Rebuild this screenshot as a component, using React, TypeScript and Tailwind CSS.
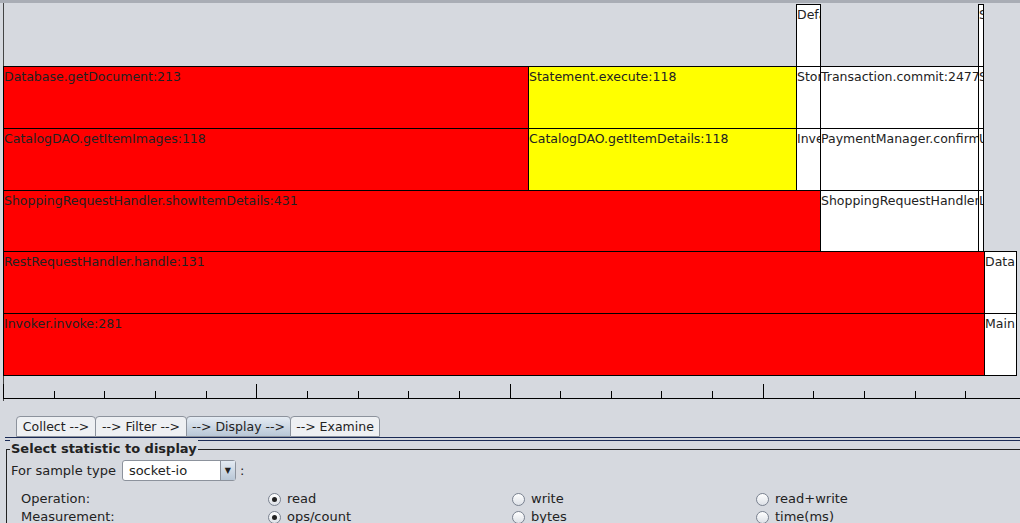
import React from "react";

type Block = { x: number; w: number; row: number; label: string; color: string };

const ROW_TOP = [4, 66, 128, 190, 251, 313];
const ROW_H = [62, 62, 62, 61, 62, 62];

const blocks: Block[] = [
  { row: 0, x: 796, w: 24, label: "Default", color: "#fff" },
  { row: 0, x: 978, w: 5, label: "S", color: "#fff" },
  { row: 1, x: 3, w: 525, label: "Database.getDocument:213", color: "#ff0000" },
  { row: 1, x: 528, w: 268, label: "Statement.execute:118", color: "#ffff00" },
  { row: 1, x: 796, w: 24, label: "Store", color: "#fff" },
  { row: 1, x: 820, w: 158, label: "Transaction.commit:2477", color: "#fff" },
  { row: 1, x: 978, w: 5, label: "S", color: "#fff" },
  { row: 2, x: 3, w: 525, label: "CatalogDAO.getItemImages:118", color: "#ff0000" },
  { row: 2, x: 528, w: 268, label: "CatalogDAO.getItemDetails:118", color: "#ffff00" },
  { row: 2, x: 796, w: 24, label: "Inventory", color: "#fff" },
  { row: 2, x: 820, w: 158, label: "PaymentManager.confirm", color: "#fff" },
  { row: 2, x: 978, w: 5, label: "U", color: "#fff" },
  { row: 3, x: 3, w: 817, label: "ShoppingRequestHandler.showItemDetails:431", color: "#ff0000" },
  { row: 3, x: 820, w: 158, label: "ShoppingRequestHandler", color: "#fff" },
  { row: 3, x: 978, w: 5, label: "L", color: "#fff" },
  { row: 4, x: 3, w: 981, label: "RestRequestHandler.handle:131", color: "#ff0000" },
  { row: 4, x: 984, w: 32, label: "Data", color: "#fff" },
  { row: 5, x: 3, w: 981, label: "Invoker.invoke:281", color: "#ff0000" },
  { row: 5, x: 984, w: 32, label: "Main", color: "#fff" },
];

const ticks = Array.from({ length: 20 }, (_, i) => 3 + Math.round(i * 50.65));

const Radio = ({ on, label }: { on?: boolean; label: string }) => (
  <span className="flex items-center gap-1.5">
    <span className="w-[13px] h-[13px] rounded-full border border-[#7a8290] bg-gradient-to-b from-white to-[#dde1e7] flex items-center justify-center">
      {on && <span className="w-[5px] h-[5px] rounded-full bg-[#222]" />}
    </span>
    {label}
  </span>
);

export default function App() {
  const tabs = [
    { t: "Collect -->", w: 80 },
    { t: "--> Filter -->", w: 92 },
    { t: "--> Display -->", w: 105 },
    { t: "--> Examine", w: 90 },
  ];
  return (
    <div
      className="w-[1020px] h-[523px] overflow-hidden bg-[#d6d9df] text-[13px] text-[#222]"
      style={{ fontFamily: '"DejaVu Sans", sans-serif' }}
    >
      <div className="relative h-[402px] border-t-[3px] border-[#a9adb5]">
        <div className="absolute left-[3px] top-0 w-px h-[398px] bg-[#444]" />
        {blocks.map((b, i) => (
          <div
            key={i}
            className="absolute border border-black overflow-hidden whitespace-nowrap leading-[16px] text-[12.5px] pt-0.5"
            style={{
              left: b.x,
              width: b.w + 1,
              top: ROW_TOP[b.row] - 3,
              height: ROW_H[b.row] + 1,
              background: b.color,
            }}
          >
            {b.label}
          </div>
        ))}
        <div className="absolute left-[3px] right-0 top-[395px] h-px bg-black" />
        {ticks.map((t, i) => (
          <div
            key={i}
            className="absolute w-px bg-black"
            style={{ left: t, top: i % 5 === 0 ? 381 : 388, height: i % 5 === 0 ? 14 : 7 }}
          />
        ))}
      </div>
      <div className="pt-[14px]">
        <div className="flex pl-4 h-[21px] text-[12.5px]">
          {tabs.map(({ t, w }, i) => (
            <div
              key={t}
              style={{ width: w }}
              className={`text-center border border-[#8c929c] rounded-t-[4px] leading-[19px] -mr-px ${
                i === 2 ? "bg-gradient-to-b from-[#e4ebf3] to-[#b9c7d6]" : "bg-[#eef0f3]"
              }`}
            >
              {t}
            </div>
          ))}
        </div>
        <div className="border-t border-[#1a2a55] ml-[5px]" />
        <div className="border-t border-[#1a2a55] mt-[2px] ml-[5px]" />
        <div className="ml-[6px] mt-[8px] border-l border-t border-[#222] relative">
          <div className="absolute -top-[10px] left-[3px] bg-[#d6d9df] font-bold px-px leading-[18px]">
            Select statistic to display
          </div>
          <div className="pt-[10px] pl-[4px] flex items-center gap-1">
            For sample type
            <div className="ml-0.5 w-[114px] h-[21px] border border-[#8c929c] rounded-[3px] bg-white flex items-center justify-between pl-1.5">
              socket-io
              <span className="w-[15px] h-full bg-gradient-to-b from-[#e4ebf3] to-[#b9c7d6] border-l border-[#8c929c] flex items-center justify-center text-[8px]">
                ▼
              </span>
            </div>
            :
          </div>
          <div className="grid grid-cols-[247px_244px_244px_1fr] pl-[14px] mt-[9px] leading-[18px]">
            <span>Operation:</span>
            <Radio on label="read" />
            <Radio label="write" />
            <Radio label="read+write" />
            <span>Measurement:</span>
            <Radio on label="ops/count" />
            <Radio label="bytes" />
            <Radio label="time(ms)" />
          </div>
        </div>
      </div>
    </div>
  );
}
